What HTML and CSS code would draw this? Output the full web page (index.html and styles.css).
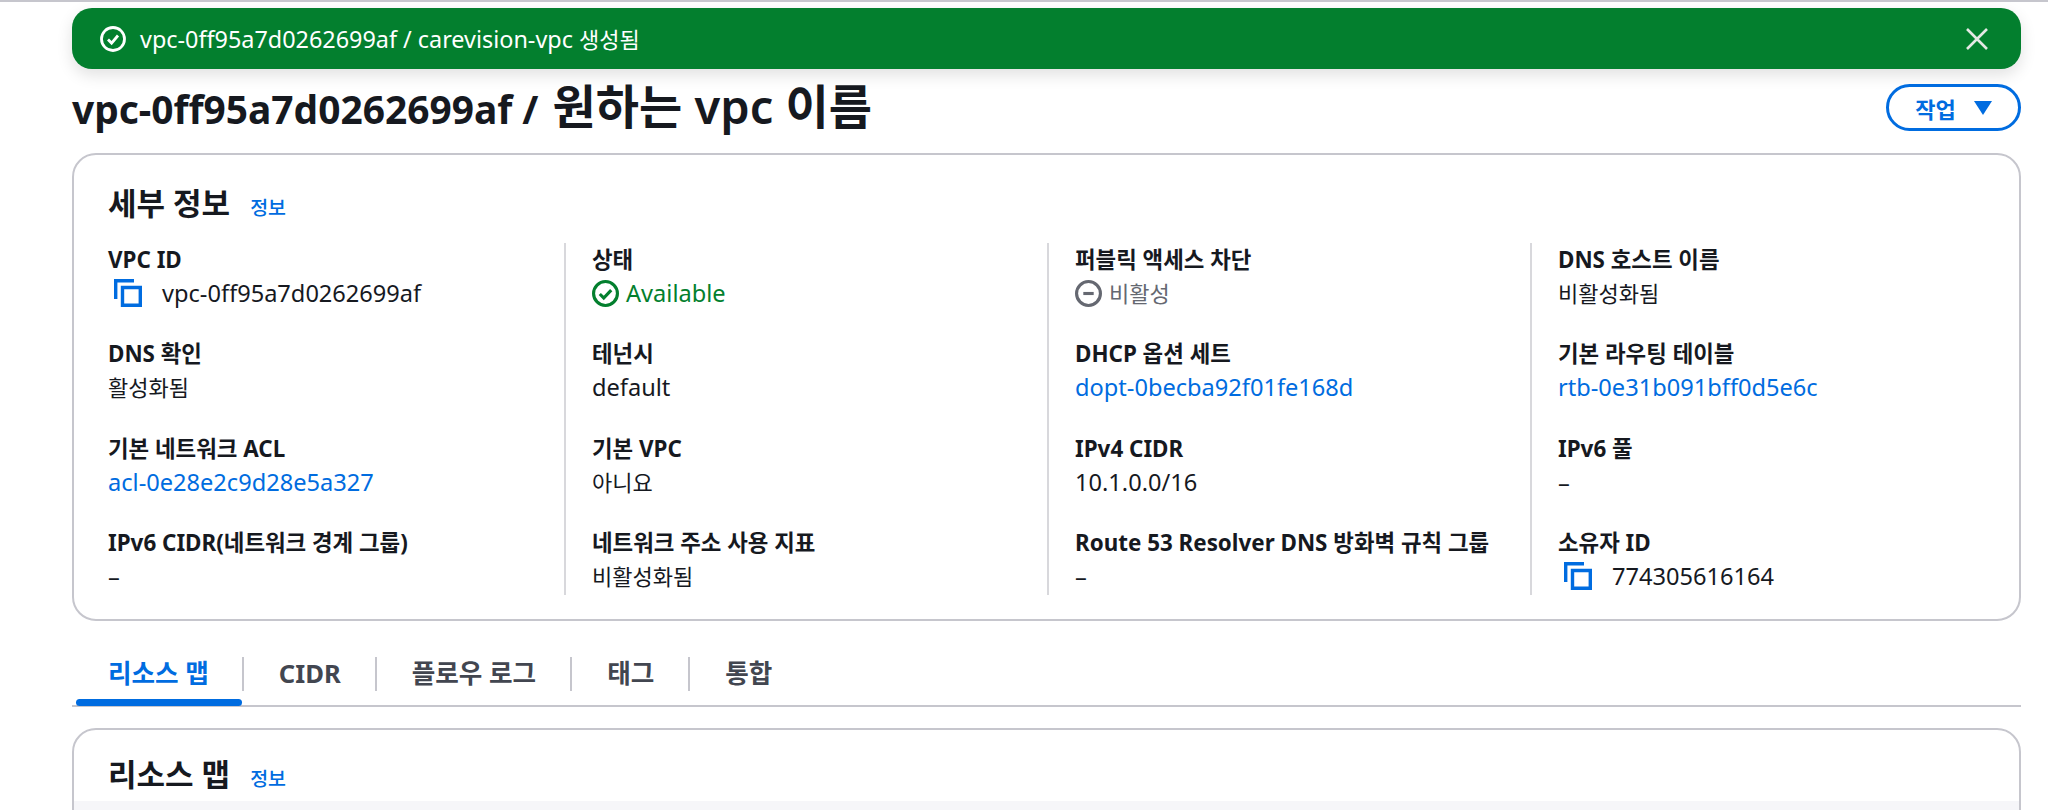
FILE: index.html
```html
<!DOCTYPE html>
<html lang="ko">
<head>
    <meta charset="UTF-8">
    <meta name="viewport" content="width=device-width, initial-scale=1.0">
    <title>VPC 세부 정보</title>
    <link rel="stylesheet" href="styles.css">
</head>
<body>
    <div class="page">

        <!-- Flash banner -->
        <div class="flash">
            <svg class="flash-icon" viewBox="0 0 26 26" fill="none" stroke="currentColor" stroke-width="2.8"><circle cx="13" cy="13" r="11.5"/><path d="M8 13.5l3.6 3.6L18 9.5"/></svg>
            <span class="flash-text">vpc-0ff95a7d0262699af / carevision-vpc <span class="ko">생성됨</span></span>
            <svg class="flash-close" viewBox="0 0 22 22" fill="none" stroke="currentColor" stroke-width="2.6"><path d="M1 1l20 20M21 1L1 21"/></svg>
        </div>

        <!-- Page header -->
        <div class="page-header">
            <h1>vpc-0ff95a7d0262699af / <span class="title-edit">원하는 vpc 이름</span></h1>
            <button class="action-btn">작업 <span class="caret"></span></button>
        </div>

        <!-- Details card -->
        <section class="card details">
            <div class="card-head">
                <h2>세부 정보</h2>
                <a class="info" href="#">정보</a>
            </div>
            <div class="columns">
                <div class="col">
                    <div class="field">
                        <div class="label">VPC ID</div>
                        <div class="value latin copy">
                            <svg class="copy-icon" viewBox="0 0 28 28" fill="none" stroke="currentColor" stroke-width="3.400"><path d="M1.700 20V1.700H20"/><path d="M8.500 8.500H26.300V26.300H8.500Z"/></svg>
                            vpc-0ff95a7d0262699af
                        </div>
                    </div>
                    <div class="field">
                        <div class="label">DNS 확인</div>
                        <div class="value">활성화됨</div>
                    </div>
                    <div class="field">
                        <div class="label">기본 네트워크 ACL</div>
                        <div class="value latin"><a href="#">acl-0e28e2c9d28e5a327</a></div>
                    </div>
                    <div class="field">
                        <div class="label">IPv6 CIDR(네트워크 경계 그룹)</div>
                        <div class="value latin">–</div>
                    </div>
                </div>
                <div class="col">
                    <div class="field">
                        <div class="label">상태</div>
                        <div class="value latin status ok">
                            <svg class="status-icon" viewBox="0 0 26 26" fill="none" stroke="currentColor" stroke-width="3"><circle cx="13" cy="13" r="11.500"/><path d="M7.500 13.500l3.800 3.800 7.200-7.600"/></svg>
                            Available
                        </div>
                    </div>
                    <div class="field">
                        <div class="label">테넌시</div>
                        <div class="value latin">default</div>
                    </div>
                    <div class="field">
                        <div class="label">기본 VPC</div>
                        <div class="value">아니요</div>
                    </div>
                    <div class="field">
                        <div class="label">네트워크 주소 사용 지표</div>
                        <div class="value">비활성화됨</div>
                    </div>
                </div>
                <div class="col">
                    <div class="field">
                        <div class="label">퍼블릭 액세스 차단</div>
                        <div class="value status off">
                            <svg class="status-icon" viewBox="0 0 26 26" fill="none" stroke="currentColor" stroke-width="3"><circle cx="13" cy="13" r="11.500"/><path d="M8 13h10"/></svg>
                            비활성
                        </div>
                    </div>
                    <div class="field">
                        <div class="label">DHCP 옵션 세트</div>
                        <div class="value latin"><a href="#">dopt-0becba92f01fe168d</a></div>
                    </div>
                    <div class="field">
                        <div class="label">IPv4 CIDR</div>
                        <div class="value latin">10.1.0.0/16</div>
                    </div>
                    <div class="field">
                        <div class="label">Route 53 Resolver DNS 방화벽 규칙 그룹</div>
                        <div class="value latin">–</div>
                    </div>
                </div>
                <div class="col">
                    <div class="field">
                        <div class="label">DNS 호스트 이름</div>
                        <div class="value">비활성화됨</div>
                    </div>
                    <div class="field">
                        <div class="label">기본 라우팅 테이블</div>
                        <div class="value latin"><a href="#">rtb-0e31b091bff0d5e6c</a></div>
                    </div>
                    <div class="field">
                        <div class="label">IPv6 풀</div>
                        <div class="value latin">–</div>
                    </div>
                    <div class="field">
                        <div class="label">소유자 ID</div>
                        <div class="value latin copy">
                            <svg class="copy-icon" viewBox="0 0 28 28" fill="none" stroke="currentColor" stroke-width="3.400"><path d="M1.700 20V1.700H20"/><path d="M8.500 8.500H26.300V26.300H8.500Z"/></svg>
                            774305616164
                        </div>
                    </div>
                </div>
            </div>
        </section>

        <!-- Tabs -->
        <nav class="tabs">
            <a class="tab active" href="#">리소스 맵</a>
            <a class="tab" href="#">CIDR</a>
            <a class="tab" href="#">플로우 로그</a>
            <a class="tab" href="#">태그</a>
            <a class="tab" href="#">통합</a>
        </nav>

        <!-- Resource map card, cut off by the window -->
        <section class="card resource">
            <div class="card-head">
                <h2>리소스 맵</h2>
                <a class="info" href="#">정보</a>
            </div>
            <div class="resource-bar"></div>
        </section>

    </div>
</body>
</html>
```

FILE: styles.css
```css
/* Basic Reset */
* {
    box-sizing: border-box;
}

html, body {
    height: 100%;
}

body {
    margin: 0;
    background-color: #fff;
    color: #16191f;
    font-family: "Noto Sans", "Noto Sans CJK KR", sans-serif;
    font-size: 22px;
    overflow: hidden;
}

a {
    color: #006ce0;
    text-decoration: none;
}

.page {
    height: 810px;
    padding: 8px 27px 0 72px;
    border-top: 2px solid #c6c6cd;
    overflow: hidden;
}

/* Flash banner */
.flash {
    display: flex;
    align-items: center;
    height: 61px;
    margin-top: -2px;
    padding: 0 33px 0 28px;
    background-color: #037f2e;
    border-radius: 20px;
    color: #fff;
    box-shadow: 0 6px 16px rgba(0, 0, 0, 0.12);
}

.flash-icon {
    width: 26px;
    height: 26px;
    flex-shrink: 0;
}

.flash-text {
    margin-left: 14px;
    flex: 1;
    font-size: 23.4px;
    white-space: nowrap;
}

.flash-text .ko {
    font-size: 22px;
}

.flash-close {
    width: 22px;
    height: 22px;
    color: #e4e8e4;
}

/* Page header */
.page-header {
    display: flex;
    justify-content: space-between;
    align-items: flex-start;
    height: 84px;
    padding-top: 14px;
}

h1 {
    margin: 0;
    font-size: 38.9px;
    line-height: 46px;
    font-weight: 700;
    white-space: nowrap;
}

.title-edit {
    font-size: 47px;
    font-weight: 600;
    line-height: 1;
    margin-left: 4px;
}

.action-btn {
    display: flex;
    align-items: center;
    justify-content: center;
    gap: 18px;
    width: 135px;
    height: 47px;
    margin-top: 1px;
    background: #fff;
    border: 3px solid #006ce0;
    border-radius: 24px;
    color: #006ce0;
    font-family: inherit;
    font-size: 22px;
    font-weight: 700;
}

.caret {
    width: 0;
    height: 0;
    border-left: 9px solid transparent;
    border-right: 9px solid transparent;
    border-top: 14px solid #006ce0;
}

/* Cards */
.card {
    border: 2px solid #c6c6cd;
    border-radius: 24px;
    padding: 0 34px;
}

.details {
    height: 468px;
}

.card-head {
    display: flex;
    align-items: baseline;
    gap: 20px;
    padding-top: 28px;
}

h2 {
    margin: 0;
    font-size: 31px;
    line-height: 40px;
    font-weight: 700;
}

.info {
    font-size: 19.5px;
    font-weight: 500;
}

/* Detail columns */
.columns {
    display: grid;
    grid-template-columns: 456px repeat(3, 483px);
    margin-top: 20px;
}

.col {
    padding: 0 0 0 26px;
    border-left: 2px solid #d8d8dc;
}

.col:first-child {
    padding-left: 0;
    border-left: none;
}

.field {
    height: 94.4px;
}

.field:last-child {
    height: 69px;
}

.label {
    font-size: 22.4px;
    font-weight: 700;
    line-height: 34px;
    white-space: nowrap;
}

.value {
    line-height: 32px;
    white-space: nowrap;
}

.latin {
    font-size: 23.6px;
}

.copy {
    display: flex;
    align-items: center;
    gap: 20px;
    padding-left: 6px;
}

.copy-icon {
    width: 28px;
    height: 28px;
    color: #006ce0;
}

.status {
    display: flex;
    align-items: center;
    gap: 7px;
}

.status-icon {
    width: 27px;
    height: 27px;
}

.ok {
    color: #037f2e;
}

.off {
    color: #656871;
}

/* Tabs */
.tabs {
    display: flex;
    height: 86px;
    border-bottom: 2px solid #c6c6cd;
    padding-top: 36px;
}

.tab {
    position: relative;
    height: 34px;
    padding: 0 34px 0 35px;
    border-left: 2px solid #c6c6cd;
    color: #424650;
    font-size: 25.6px;
    line-height: 34px;
    font-weight: 700;
}

.tab:first-child {
    border-left: none;
    padding: 0 33px 0 36px;
}

.tab.active {
    color: #006ce0;
}

.tab.active::after {
    content: "";
    position: absolute;
    left: 4px;
    right: 0;
    top: 42px;
    height: 7px;
    background-color: #006ce0;
    border-radius: 4px;
}

/* Resource map card */
.resource {
    margin-top: 21px;
    height: 200px;
}

.resource .card-head {
    padding-top: 24px;
}

.resource-bar {
    height: 60px;
    margin: 7px -34px 0;
    background-color: #f6f6f9;
}
```
